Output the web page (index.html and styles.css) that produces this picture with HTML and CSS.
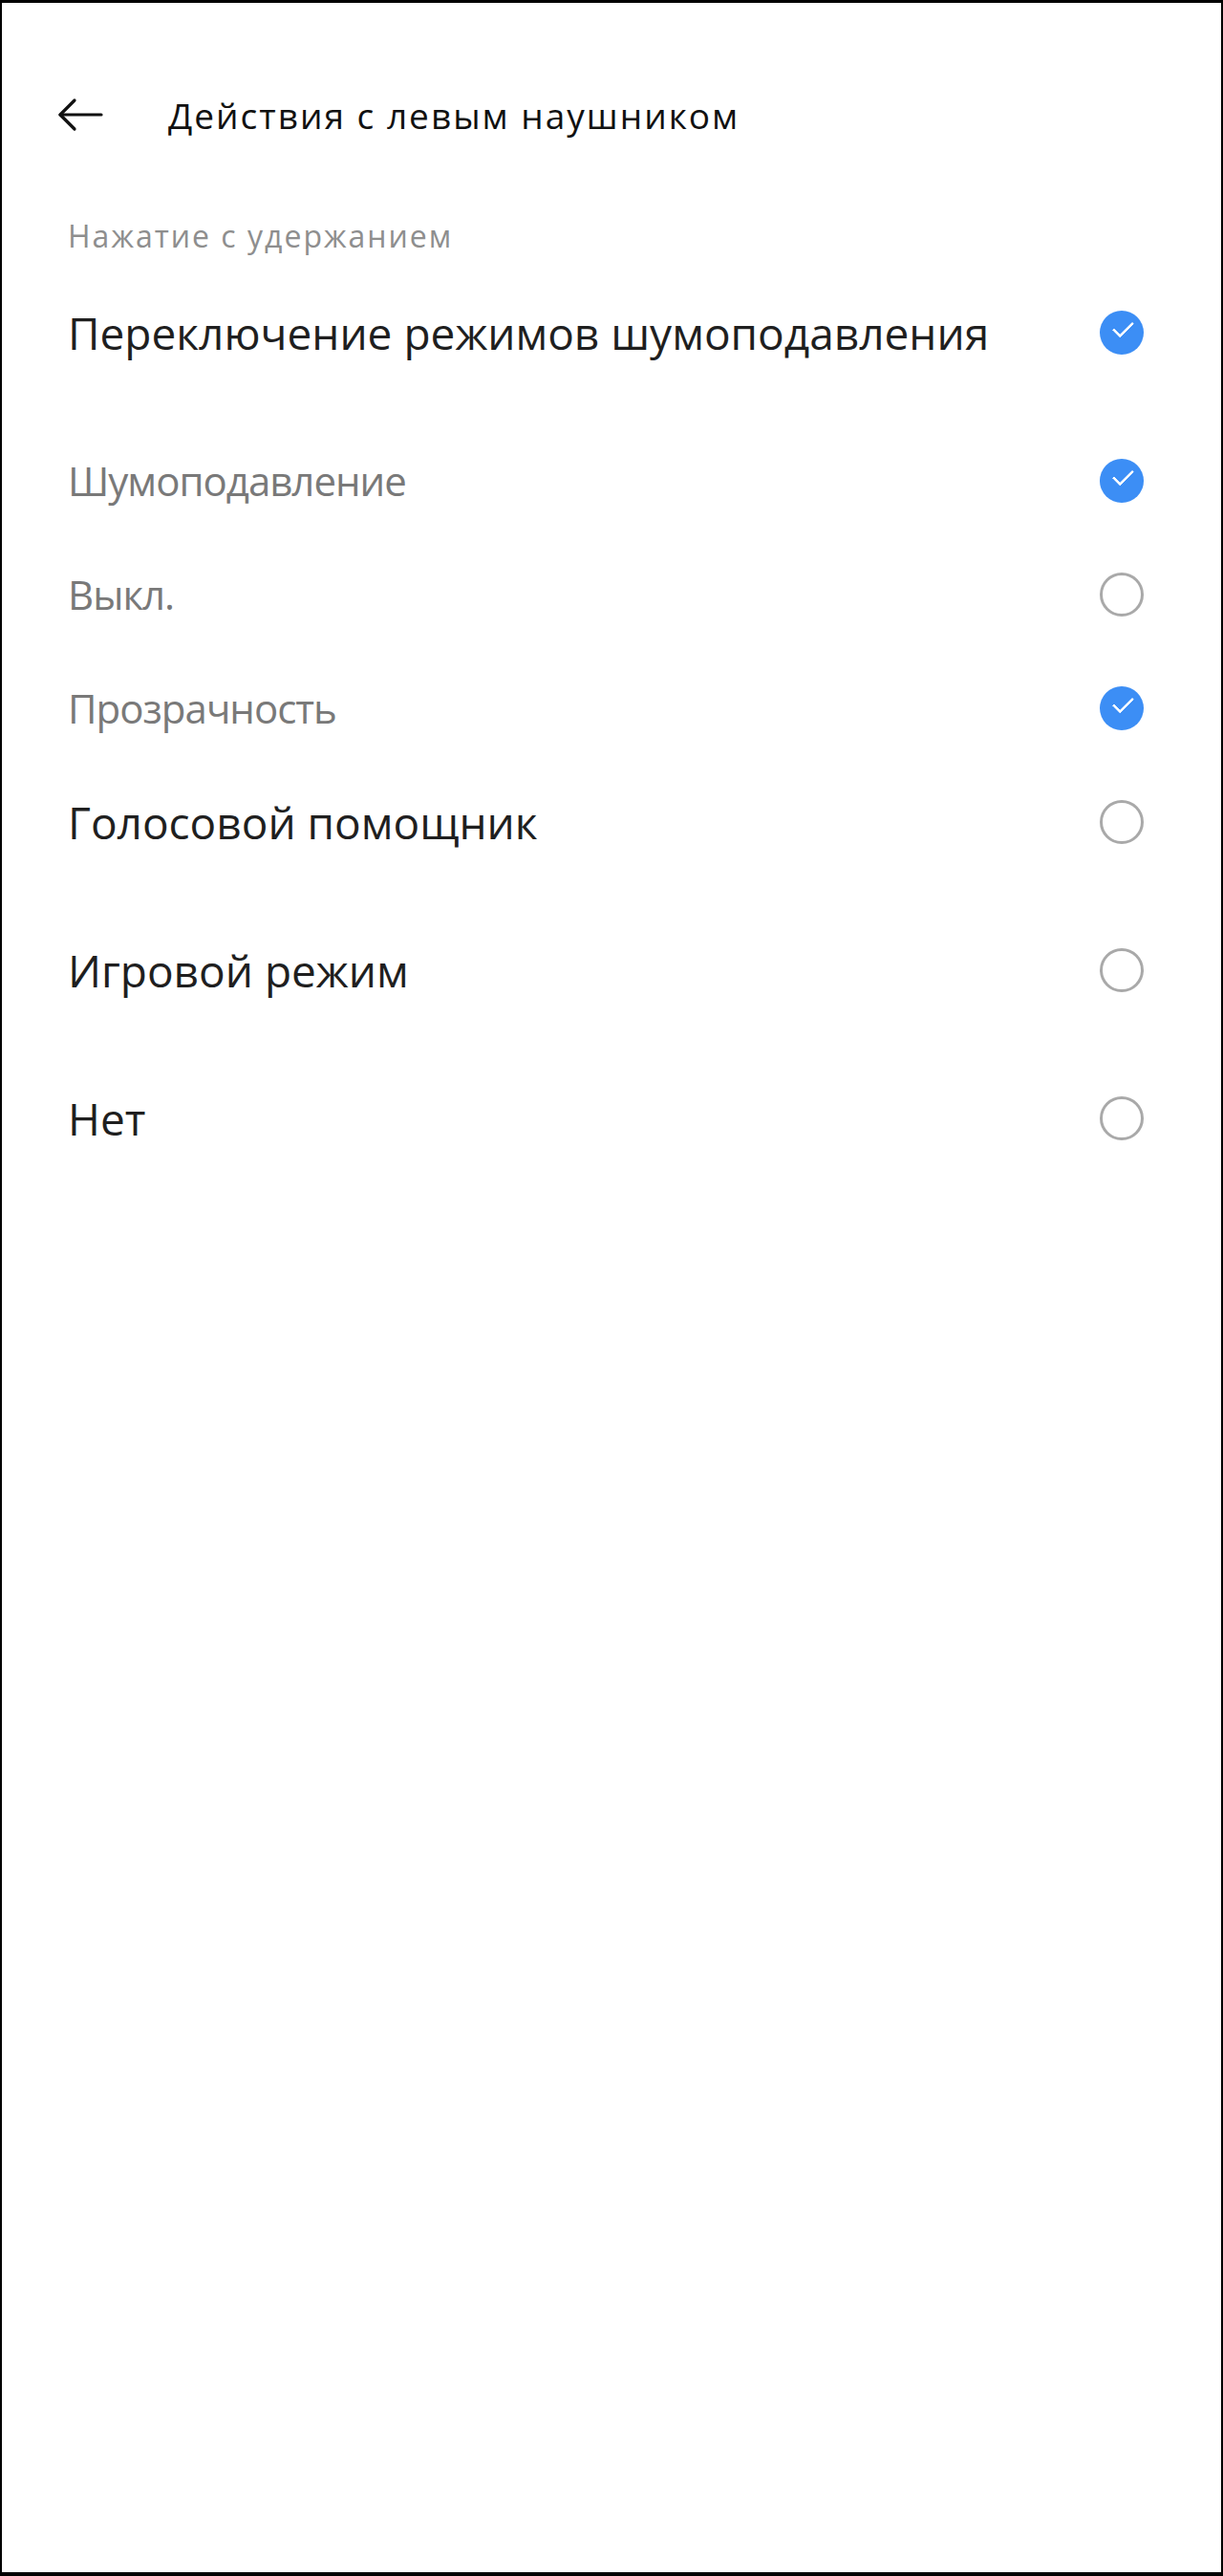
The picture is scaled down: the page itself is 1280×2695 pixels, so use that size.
FILE: index.html
```html
<!DOCTYPE html>
<html lang="ru">
<head>
  <meta charset="UTF-8">
  <meta name="viewport" content="width=device-width, initial-scale=1.0">
  <title>Действия с левым наушником</title>
  <link rel="stylesheet" href="styles.css">
</head>
<body>
  <div class="screen">
    <div class="header">
      <button class="back" aria-label="Назад">
        <svg width="48" height="36" viewBox="0 0 48 36" fill="none" stroke="#111" stroke-width="3.2" stroke-linecap="round" stroke-linejoin="round">
          <path d="M3 18H46"/>
          <path d="M18 3L3 18L18 33"/>
        </svg>
      </button>
      <div class="title">Действия с левым наушником</div>
    </div>

    <div class="section-label">Нажатие с удержанием</div>

    <div class="list">
      <div class="row main">
        <span>Переключение режимов шумоподавления</span>
        <span class="mark checked"></span>
      </div>

      <div class="sub-group">
        <div class="row sub">
          <span>Шумоподавление</span>
          <span class="mark checked"></span>
        </div>
        <div class="row sub">
          <span>Выкл.</span>
          <span class="mark"></span>
        </div>
        <div class="row sub">
          <span>Прозрачность</span>
          <span class="mark checked"></span>
        </div>
      </div>

      <div class="row main">
        <span>Голосовой помощник</span>
        <span class="mark"></span>
      </div>
      <div class="row main">
        <span>Игровой режим</span>
        <span class="mark"></span>
      </div>
      <div class="row main">
        <span>Нет</span>
        <span class="mark"></span>
      </div>
    </div>
  </div>
</body>
</html>
```

FILE: styles.css
```css
body {
  margin: 0;
  padding: 0;
  background: #ffffff;
  font-family: "Open Sans", "Noto Sans", sans-serif;
}

.screen {
  height: 100vh;
  box-sizing: border-box;
  border: 2px solid #000;
  border-top-width: 3px;
  border-bottom-width: 4px;
  background: #fff;
}

.header {
  display: flex;
  align-items: center;
  height: 82px;
  padding: 76px 0 0 58px;
  gap: 68px;
}

.back {
  background: none;
  border: none;
  padding: 0;
  width: 48px;
  height: 36px;
  cursor: pointer;
}

.back svg {
  display: block;
}

.title {
  font-size: 37px;
  color: #111;
  letter-spacing: 2px;
}

.section-label {
  margin-top: 67px;
  padding-left: 69px;
  font-size: 32px;
  line-height: 38px;
  color: #8e8e8e;
  letter-spacing: 2px;
}

.list {
  margin-top: 22px;
}

.row {
  display: flex;
  align-items: center;
  justify-content: space-between;
  height: 119px;
  padding: 0 81px 0 69px;
}

.row.main {
  font-size: 46px;
  color: #1f1f1f;
  letter-spacing: 0;
}

.row.main + .row.main {
  margin-top: 36px;
}

.sub-group {
  margin-top: 36px;
}

.row.sub {
  font-size: 42px;
  color: #797979;
  letter-spacing: -1px;
}

.mark {
  width: 46px;
  height: 46px;
  box-sizing: border-box;
  border: 3.5px solid #a9a9a9;
  border-radius: 50%;
  flex-shrink: 0;
  position: relative;
}

.mark.checked {
  border: none;
  background: #3c8ef5;
}

.mark.checked::after {
  content: "";
  position: absolute;
  left: 14px;
  top: 11px;
  width: 18px;
  height: 9px;
  border-left: 3.5px solid #fff;
  border-bottom: 3.5px solid #fff;
  border-radius: 1px;
  transform: rotate(-45deg);
  transform-origin: center;
}
```
